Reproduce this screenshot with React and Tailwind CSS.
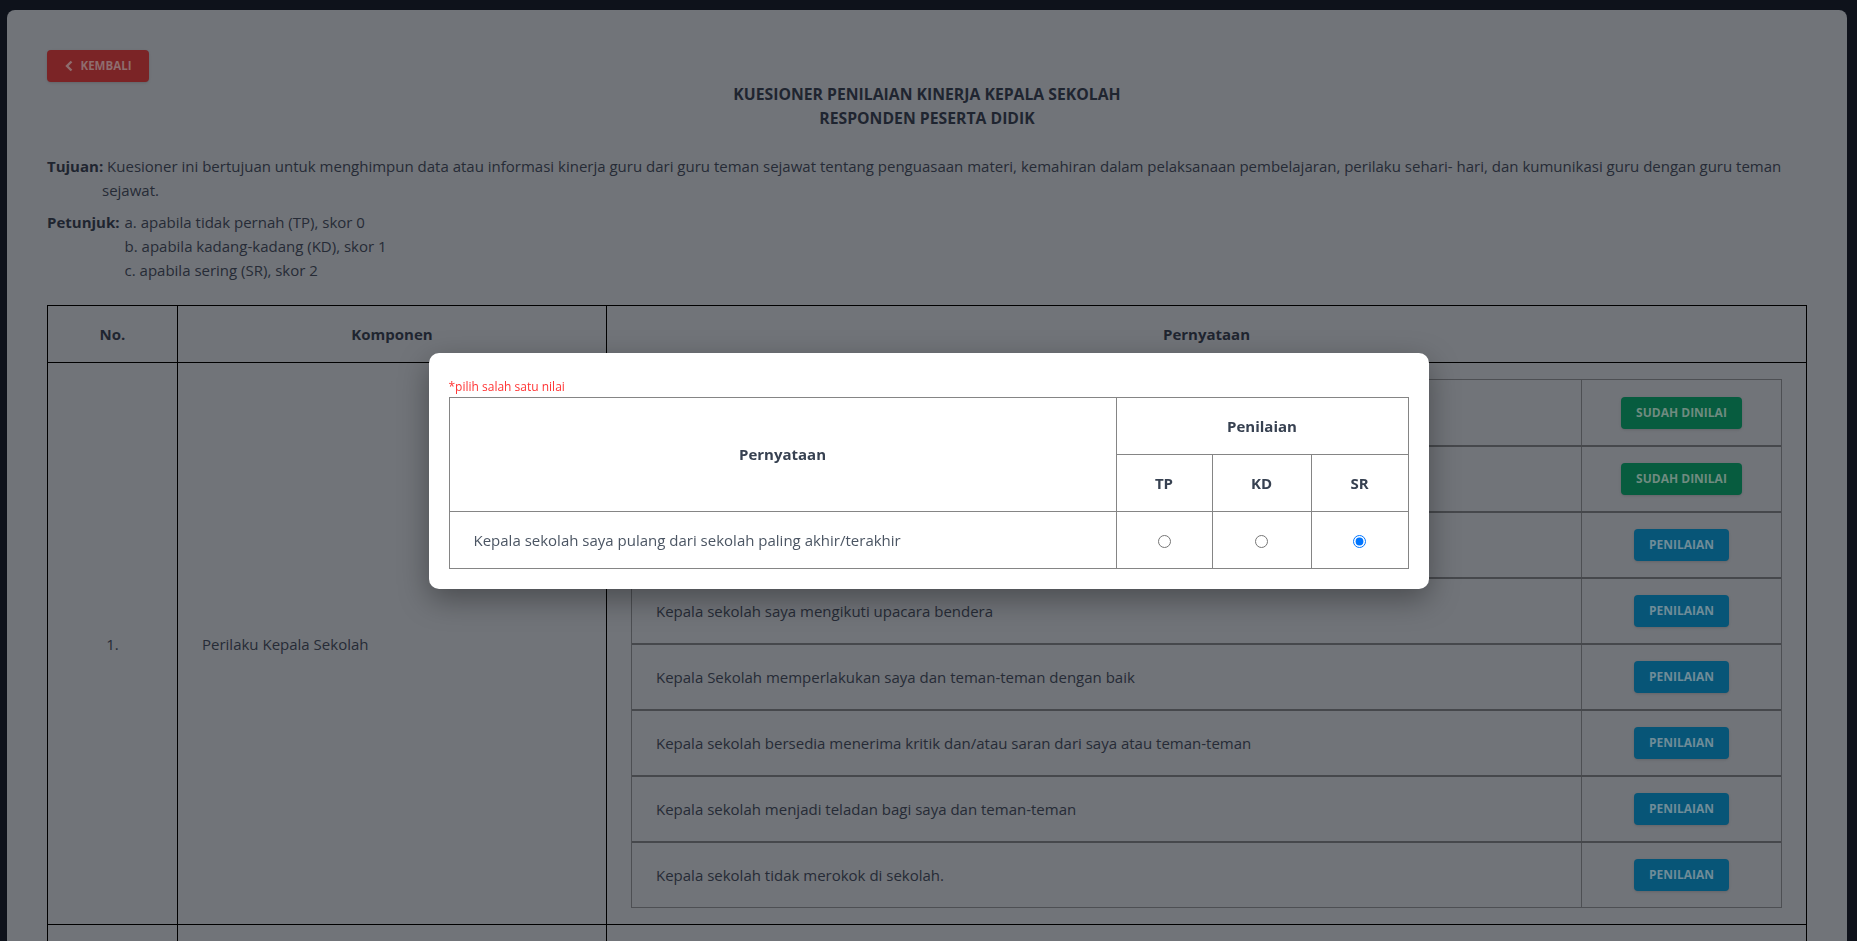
const statements = [
  { text: "Kepala sekolah saya datang ke sekolah paling awal/pertama", done: true },
  { text: "Kepala sekolah saya mengikuti kegiatan sekolah dengan tertib", done: true },
  { text: "Kepala sekolah saya pulang dari sekolah paling akhir/terakhir", done: false },
  { text: "Kepala sekolah saya mengikuti upacara bendera", done: false },
  { text: "Kepala Sekolah memperlakukan saya dan teman-teman dengan baik", done: false },
  { text: "Kepala sekolah bersedia menerima kritik dan/atau saran dari saya atau teman-teman", done: false },
  { text: "Kepala sekolah menjadi teladan bagi saya dan teman-teman", done: false },
  { text: "Kepala sekolah tidak merokok di sekolah.", done: false },
]

function StatementTable({ items }) {
  return (
    <div className="border border-[#4d4f53]">
      {items.map((item, i) => (
        <div
          key={i}
          className={`flex ${i > 0 ? "h-[66px] border-t-2 border-[#46484c]" : "h-[65px]"}`}
        >
          <div className="flex-1 flex items-center px-6 text-[#262b36]">{item.text}</div>
          <div className="w-[200px] border-l border-[#4d4f53] flex items-center justify-center">
            {item.done ? (
              <button className="h-8 w-[121px] rounded bg-[#075c3f] text-[#6f8b80] text-[12px] font-bold uppercase shadow">
                Sudah Dinilai
              </button>
            ) : (
              <button className="h-8 w-[95px] rounded bg-[#075577] text-[#6f8c98] text-[12px] font-bold uppercase shadow">
                Penilaian
              </button>
            )}
          </div>
        </div>
      ))}
    </div>
  )
}

function RatingModal() {
  return (
    <div className="fixed inset-0 flex items-center justify-center">
      <div className="w-[1000px] bg-white rounded-[10px] px-5 pt-6 pb-5 shadow-[0_10px_30px_rgba(0,0,0,0.35)]">
        <p className="text-[12px] leading-5 text-[#ff3333]">*pilih salah satu nilai</p>
        <table className="w-full border-collapse text-[15px] leading-6">
          <thead>
            <tr>
              <th rowSpan={2} className="border border-[#858585] py-4 font-bold text-[#374151]">
                Pernyataan
              </th>
              <th colSpan={3} className="border border-[#858585] py-4 font-bold text-[#374151]">
                Penilaian
              </th>
            </tr>
            <tr>
              <th className="w-[96px] border border-[#858585] py-4 font-bold text-[#374151]">TP</th>
              <th className="w-[99px] border border-[#858585] py-4 font-bold text-[#374151]">KD</th>
              <th className="w-[97px] border border-[#858585] py-4 font-bold text-[#374151]">SR</th>
            </tr>
          </thead>
          <tbody>
            <tr>
              <td className="border border-[#858585] px-6 py-4 text-[#4b5563]">
                Kepala sekolah saya pulang dari sekolah paling akhir/terakhir
              </td>
              {["TP", "KD", "SR"].map((v) => (
                <td key={v} className="border border-[#858585] py-4 text-center">
                  <input
                    type="radio"
                    name="nilai"
                    value={v}
                    defaultChecked={v === "SR"}
                    className="w-[13px] h-[13px] m-0 align-middle accent-[#0075ff]"
                  />
                </td>
              ))}
            </tr>
          </tbody>
        </table>
      </div>
    </div>
  )
}

export default function App() {
  return (
    <div className="h-screen overflow-hidden bg-[#0e121b] pt-[10px] pl-[7px] pr-[10px] font-['Open_Sans',sans-serif] text-[15px] leading-6">
      <div className="bg-[#717479] rounded-lg p-10 pb-20">
        <button className="flex items-center justify-center gap-2 w-[102px] h-8 rounded bg-[#7b2426] text-[#8e6d6e] text-[11.5px] font-bold uppercase shadow">
          <svg width="8" height="12" viewBox="0 0 8 12" fill="none">
            <polyline points="6.5,1.5 2,6 6.5,10.5" stroke="currentColor" strokeWidth="2.4" />
          </svg>
          Kembali
        </button>

        <div className="text-center font-bold text-[#1f2530] text-[15.75px]">
          <p>KUESIONER PENILAIAN KINERJA KEPALA SEKOLAH</p>
          <p>RESPONDEN PESERTA DIDIK</p>
        </div>

        <p className="mt-6 pl-[55px] -indent-[55px] text-[#262b36]">
          <span className="font-bold text-[#1f2530]">Tujuan:</span> Kuesioner ini bertujuan untuk
          menghimpun data atau informasi kinerja guru dari guru teman sejawat tentang penguasaan
          materi, kemahiran dalam pelaksanaan pembelajaran, perilaku sehari- hari, dan kumunikasi
          guru dengan guru teman sejawat.
        </p>

        <div className="mt-2 flex gap-[5px] text-[#262b36]">
          <span className="font-bold text-[#1f2530]">Petunjuk:</span>
          <div>
            <p>a. apabila tidak pernah (TP), skor 0</p>
            <p>b. apabila kadang-kadang (KD), skor 1</p>
            <p>c. apabila sering (SR), skor 2</p>
          </div>
        </div>

        <table className="mt-[23px] w-full border-collapse">
          <thead>
            <tr>
              <th className="w-[130px] border border-black py-4 font-bold text-[#1f2530]">No.</th>
              <th className="w-[429px] border border-black py-4 font-bold text-[#1f2530]">Komponen</th>
              <th className="border border-black py-4 font-bold text-[#1f2530]">Pernyataan</th>
            </tr>
          </thead>
          <tbody>
            <tr>
              <td className="border border-black text-center text-[#262b36]">1.</td>
              <td className="border border-black px-6 text-[#262b36]">Perilaku Kepala Sekolah</td>
              <td className="border border-black px-6 py-4">
                <StatementTable items={statements} />
              </td>
            </tr>
            <tr>
              <td className="border border-black text-center text-[#262b36]">2.</td>
              <td className="border border-black px-6 text-[#262b36]">Hubungan Kepala Sekolah dengan Warga Sekolah</td>
              <td className="border border-black px-6 py-4">
                <StatementTable items={statements.slice(0, 4)} />
              </td>
            </tr>
          </tbody>
        </table>
      </div>

      <RatingModal />
    </div>
  )
}
